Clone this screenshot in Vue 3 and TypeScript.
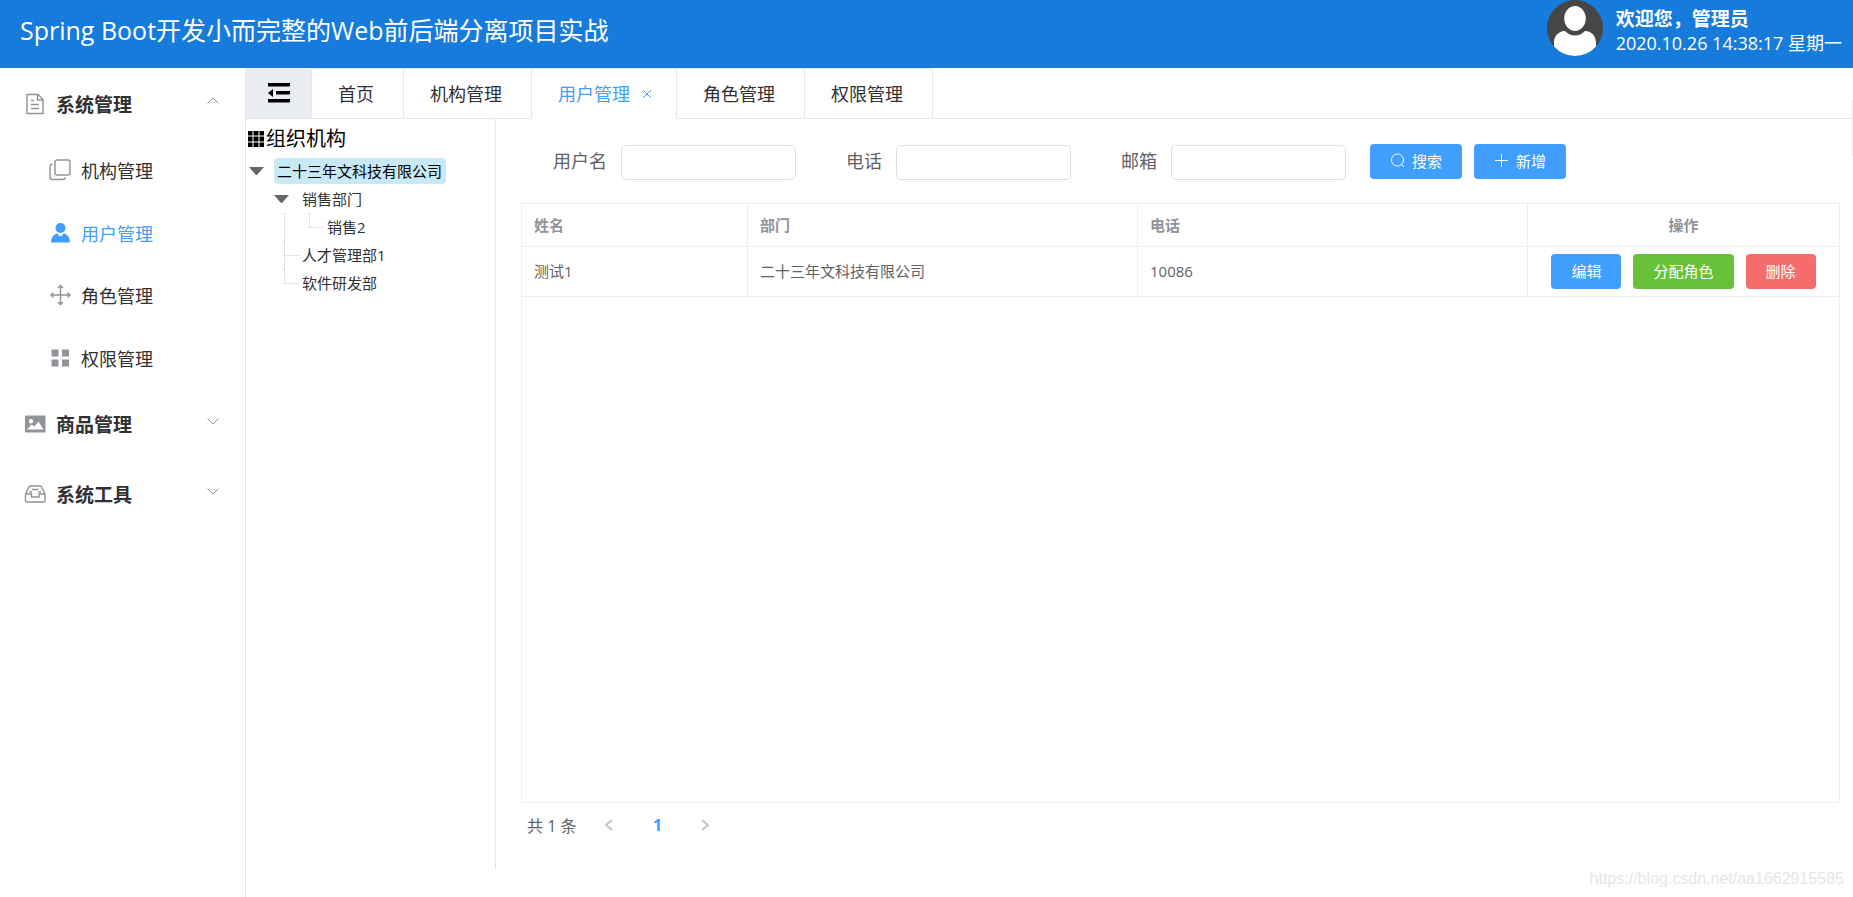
<script setup lang="ts">
import { reactive, ref } from 'vue'

interface MenuItem { key: string; label: string; icon: string }
interface MenuGroup { label: string; icon: string; open: boolean; children: MenuItem[] }
interface Tab { label: string; closable: boolean }
interface Field { id: string; label: string }
interface UserRow { name: string; dept: string; phone: string }

const groups = reactive<MenuGroup[]>([
  {
    label: '系统管理', icon: 'document', open: true,
    children: [
      { key: 'org', label: '机构管理', icon: 'copy' },
      { key: 'user', label: '用户管理', icon: 'user' },
      { key: 'role', label: '角色管理', icon: 'rank' },
      { key: 'perm', label: '权限管理', icon: 'menu' },
    ],
  },
  { label: '商品管理', icon: 'picture', open: false, children: [] },
  { label: '系统工具', icon: 'box', open: false, children: [] },
])
const activeMenu = ref('user')

const tabs: Tab[] = [
  { label: '首页', closable: false },
  { label: '机构管理', closable: false },
  { label: '用户管理', closable: true },
  { label: '角色管理', closable: false },
  { label: '权限管理', closable: false },
]
const activeTab = ref('用户管理')

const fields: Field[] = [
  { id: 'username', label: '用户名' },
  { id: 'phone', label: '电话' },
  { id: 'email', label: '邮箱' },
]
const query = reactive<Record<string, string>>({ username: '', phone: '', email: '' })

const rows: UserRow[] = [{ name: '测试1', dept: '二十三年文科技有限公司', phone: '10086' }]
</script>

<template>
  <div class="page">
    <header class="topbar">
      <h1>Spring Boot开发小而完整的Web前后端分离项目实战</h1>
      <div class="account">
        <svg class="avatar" viewBox="0 0 56 56" aria-hidden="true">
          <circle cx="28" cy="28" r="28" fill="#464646" />
          <ellipse cx="28" cy="18.500" rx="10.800" ry="12.500" fill="#fff" />
          <path d="M7 46.500V43C7 36 11 31.500 18 31Q22.500 35.500 28 35.500T38 31C45 31.500 49 36 49 43V46.500A28 28 0 0 1 7 46.500Z" fill="#fff" />
        </svg>
        <div class="greeting">
          <strong>欢迎您，管理员</strong>
          <span>2020.10.26 14:38:17 星期一</span>
        </div>
      </div>
    </header>

    <div class="body">
      <nav class="sidebar">
        <section v-for="group in groups" :key="group.label">
          <button class="group" type="button" :aria-expanded="group.open" @click="group.open = !group.open">
            <svg v-if="group.icon === 'document'" class="icon" viewBox="0 0 22 22">
              <path d="M3 1.500H14L19 6.500V20.500H3ZM13.500 1.500V7H19M7 7.500H10M7 11.500H15M7 15.500H15" />
            </svg>
            <svg v-else-if="group.icon === 'picture'" class="icon solid" viewBox="0 0 22 22">
              <path fill-rule="evenodd" d="M1 2.500H21.500V19.500H1ZM7 6A2.200 2.200 0 1 0 7 10.400A2.200 2.200 0 0 0 7 6ZM3 16.500H19.500L14.500 8.500L10.500 13.500L7.500 11.500Z" />
            </svg>
            <svg v-else class="icon" viewBox="0 0 22 22">
              <path d="M1.500 11L5 4Q5.500 3 6.500 3H16Q17 3 17.500 4L21 11V18Q21 19 20 19H2.500Q1.500 19 1.500 18V11H7.500V14H15V11H21M8 6.500H14.500M5.500 9H8M14.500 9H17" />
            </svg>
            <span>{{ group.label }}</span>
            <svg class="chevron" :class="{ flipped: group.open }" viewBox="0 0 14 14">
              <path d="M1.500 4.500L7 10L12.500 4.500" />
            </svg>
          </button>
          <ul v-if="group.open && group.children.length">
            <li v-for="item in group.children" :key="item.key">
              <a href="#" :class="{ active: item.key === activeMenu }" @click.prevent="activeMenu = item.key">
                <svg v-if="item.icon === 'copy'" class="icon" viewBox="0 0 22 22">
                  <rect x="6" y="1" width="15" height="15" rx="2" />
                  <path d="M3.500 5Q1 5.500 1 8V18Q1 20.500 3.500 20.500H13.500Q16 20.500 16.500 18.500" />
                </svg>
                <svg v-else-if="item.icon === 'user'" class="icon solid" viewBox="0 0 22 22">
                  <circle cx="11.500" cy="6" r="5" />
                  <path d="M2 20.500Q2 13 8.500 11.200L10.500 14.500L11.500 13.500L12.500 14.500L14.500 11.200Q21 13 21 20.500Z" />
                </svg>
                <svg v-else-if="item.icon === 'rank'" class="icon" viewBox="0 0 22 22">
                  <path d="M11.500 1.500V20.500M2 11H21M9 4L11.500 1.500L14 4M9 18L11.500 20.500L14 18M4.500 8.500L2 11L4.500 13.500M18.500 8.500L21 11L18.500 13.500" />
                </svg>
                <svg v-else class="icon solid" viewBox="0 0 22 22">
                  <path d="M2.500 2.500H9.500V9.500H2.500ZM13 2.500H20V9.500H13ZM2.500 12.500H9.500V19.500H2.500ZM13 12.500H20V19.500H13Z" />
                </svg>
                <span>{{ item.label }}</span>
              </a>
            </li>
          </ul>
        </section>
      </nav>

      <main class="workspace">
        <div class="tabbar">
          <button class="collapse" type="button" aria-label="收起菜单">
            <svg viewBox="0 0 24 20">
              <path d="M1 0H23V3.500H1ZM9 8H23V11.500H9ZM1 16H23V19.500H1ZM1 10L6 6V14Z" />
            </svg>
          </button>
          <div class="tabs" role="tablist">
            <button
              v-for="tab in tabs" :key="tab.label" class="tab" type="button" role="tab"
              :class="{ active: tab.label === activeTab }" :aria-selected="tab.label === activeTab"
              @click="activeTab = tab.label"
            >
              <span>{{ tab.label }}</span>
              <svg v-if="tab.closable" viewBox="0 0 10 10"><path d="M1 1L9 9M9 1L1 9" /></svg>
            </button>
          </div>
        </div>

        <div class="content">
          <aside class="org">
            <h2>
              <svg viewBox="0 0 16 16">
                <path d="M0 0H4.500V4.500H0ZM5.500 0H10.500V4.500H5.500ZM11.500 0H16V4.500H11.500ZM0 5.500H4.500V10.500H0ZM5.500 5.500H10.500V10.500H5.500ZM11.500 5.500H16V10.500H11.500ZM0 11.500H4.500V16H0ZM5.500 11.500H10.500V16H5.500ZM11.500 11.500H16V16H11.500Z" />
              </svg>
              <span>组织机构</span>
            </h2>
            <ul class="tree" role="tree">
              <li role="treeitem">
                <div class="node"><i class="caret"></i><span class="selected">二十三年文科技有限公司</span></div>
                <ul>
                  <li role="treeitem">
                    <div class="node"><i class="caret"></i><span>销售部门</span></div>
                    <ul>
                      <li role="treeitem"><div class="node leaf last"><span>销售2</span></div></li>
                    </ul>
                  </li>
                  <li role="treeitem"><div class="node leaf"><span>人才管理部1</span></div></li>
                  <li role="treeitem"><div class="node leaf last"><span>软件研发部</span></div></li>
                </ul>
              </li>
            </ul>
          </aside>

          <section class="users">
            <form @submit.prevent>
              <div v-for="field in fields" :key="field.id" class="field">
                <label :for="field.id">{{ field.label }}</label>
                <input :id="field.id" v-model="query[field.id]" type="text">
              </div>
              <div class="actions">
                <button class="btn primary" type="submit">
                  <svg viewBox="0 0 15 15"><circle cx="7.500" cy="7" r="6" /><path d="M11.500 11.500L14 14" /></svg>
                  <span>搜索</span>
                </button>
                <button class="btn primary" type="button">
                  <svg viewBox="0 0 15 15"><path d="M7.500 1V14M1 7.500H14" /></svg>
                  <span>新增</span>
                </button>
              </div>
            </form>

            <div class="table-box">
              <table>
                <colgroup><col class="c-name"><col class="c-wide"><col class="c-wide"><col class="c-ops"></colgroup>
                <thead>
                  <tr><th>姓名</th><th>部门</th><th>电话</th><th class="ops">操作</th></tr>
                </thead>
                <tbody>
                  <tr v-for="row in rows" :key="row.name">
                    <td>{{ row.name }}</td>
                    <td>{{ row.dept }}</td>
                    <td>{{ row.phone }}</td>
                    <td class="ops">
                      <div class="row-actions">
                        <button class="btn primary" type="button">编辑</button>
                        <button class="btn success" type="button">分配角色</button>
                        <button class="btn danger" type="button">删除</button>
                      </div>
                    </td>
                  </tr>
                </tbody>
              </table>
            </div>

            <div class="pager">
              <span class="total">共 1 条</span>
              <button type="button" disabled aria-label="上一页"><svg viewBox="0 0 14 14"><path d="M10 2L4 7L10 12" /></svg></button>
              <button type="button" class="current">1</button>
              <button type="button" disabled aria-label="下一页"><svg viewBox="0 0 14 14"><path d="M4 2L10 7L4 12" /></svg></button>
            </div>
          </section>
        </div>
      </main>
    </div>
    <span class="watermark">https://blog.csdn.net/aa1662915585</span>
  </div>
</template>

<style>
body { margin: 0; }
</style>

<style scoped>
.page {
  position: relative;
  display: flex;
  flex-direction: column;
  min-height: 100vh;
  background: #fff;
  color: #303133;
  font-family: "Open Sans", "Noto Sans CJK SC", sans-serif;
}
.page *, .page { box-sizing: border-box; }
button { font-family: inherit; cursor: pointer; }
ul { list-style: none; margin: 0; padding: 0; }
svg { flex: none; fill: none; stroke: currentColor; }

.topbar {
  display: flex;
  justify-content: space-between;
  height: 68px;
  padding: 0 11px 0 20px;
  background: #177bdb;
  color: #fff;
}
h1 { margin: 0; font-size: 25px; font-weight: 400; line-height: 61px; white-space: nowrap; }
.account { display: flex; gap: 13px; }
.avatar { width: 56px; height: 56px; stroke: none; }
.greeting { display: flex; flex-direction: column; padding-top: 8px; white-space: nowrap; }
.greeting strong { font-size: 19px; line-height: 23px; }
.greeting span { font-size: 18px; line-height: 24px; }

.body { display: flex; flex: 1; }
.sidebar { flex: none; width: 246px; padding-top: 1px; border-right: 1px solid #e6e6e6; }
.group {
  display: flex;
  align-items: center;
  gap: 10px;
  width: 100%;
  height: 70px;
  padding: 0 25px 0 24px;
  border: 0;
  background: none;
  color: #303133;
  font-size: 19px;
  font-weight: 700;
}
.icon { width: 22px; height: 22px; color: #909399; stroke-width: 1.4; }
.icon.solid { fill: currentColor; stroke: none; }
.chevron { width: 14px; height: 14px; margin: 0 0 7px auto; color: #909399; }
.flipped { transform: rotate(180deg); }
.sidebar ul { display: grid; grid-template-rows: repeat(4, 1fr); height: 250px; }
.sidebar a {
  display: flex;
  align-items: center;
  gap: 10px;
  height: 100%;
  padding-left: 49px;
  color: #303133;
  font-size: 18px;
  text-decoration: none;
}
.sidebar a.active, .sidebar a.active .icon { color: #409eff; }

.workspace { position: relative; display: flex; flex: 1; flex-direction: column; min-width: 0; }
.workspace::after { content: ""; position: absolute; top: 32px; right: 0; width: 1px; height: 56px; background: #ebebeb; }
.tabbar { display: flex; height: 51px; border-bottom: 1px solid #e4e7ed; }
.collapse { display: flex; align-items: center; justify-content: center; width: 65px; padding: 0; border: 0; background: #e9edf2; }
.collapse svg { width: 24px; height: 20px; fill: #000; stroke: none; }
.tabs { display: flex; height: 51px; border: 1px solid #e4e7ed; border-bottom: 0; border-radius: 4px 4px 0 0; }
.tab {
  display: flex;
  align-items: center;
  gap: 12px;
  height: 50px;
  padding: 0 29px 2px 26px;
  border: 0;
  border-left: 1px solid #e4e7ed;
  border-bottom: 1px solid #e4e7ed;
  background: none;
  color: #303133;
  font-size: 18px;
}
.tab:first-child { border-left: 0; }
.tab.active { padding: 0 24px 2px 26px; border-bottom-color: #fff; color: #409eff; }
.tab svg { width: 10px; height: 10px; margin-top: 3px; }

.content { display: flex; flex: 1; padding-bottom: 28px; }
.org { flex: none; width: 250px; border-right: 1px solid #e6e6e6; }
h2 { display: flex; align-items: center; gap: 2px; margin: 0; padding: 5px 0 0 2px; color: #000; font-size: 20px; font-weight: 400; line-height: 30px; }
h2 svg { width: 16px; height: 16px; fill: #000; stroke: none; }
.tree { padding: 3px 0 0 3px; font-size: 15px; }
.tree ul { padding-left: 25px; }
.node { display: flex; align-items: center; height: 28px; }
.caret { flex: none; width: 15px; margin-right: 10px; border: 7px solid transparent; border-top: 8px solid #666; border-bottom: 0; }
.node span { padding: 0 3px; line-height: 26px; white-space: nowrap; }
.node .selected { padding: 0 4px 0 3px; border-radius: 4px; background: #c9e9f7; color: #000; }
.leaf { position: relative; padding-left: 25px; }
.leaf::before, .leaf::after { content: ""; position: absolute; left: 10px; }
.leaf::before { top: 0; bottom: 0; border-left: 1px dotted #ccc; }
.leaf::after { top: 14px; width: 15px; border-top: 1px dotted #ccc; }
.leaf.last::before { bottom: 14px; }
.tree ul ul { position: relative; }
.tree ul ul::before { content: ""; position: absolute; top: 0; bottom: 0; left: 10px; border-left: 1px dotted #ccc; }

.users { display: flex; flex: 1; flex-direction: column; min-width: 0; padding: 25px 13px 27px 25px; }
form { display: flex; height: 59px; }
.field { display: flex; align-items: flex-start; gap: 14px; }
label { width: 86px; color: #606266; font-size: 18px; line-height: 35px; text-align: right; }
.field input {
  width: 175px;
  height: 35px;
  margin-top: 1px;
  padding: 0 15px;
  border: 1px solid #dcdfe6;
  border-radius: 5px;
  background: #fff;
  color: #606266;
  font: inherit;
  font-size: 16px;
  outline: 0;
}
.actions { display: flex; align-items: flex-start; gap: 12px; margin-left: 24px; }
.btn {
  display: flex;
  align-items: center;
  gap: 7px;
  height: 35px;
  padding: 0 20px 2px;
  border: 0;
  border-radius: 4px;
  color: #fff;
  font-size: 15px;
  white-space: nowrap;
}
.btn svg { width: 15px; height: 15px; }
.primary { background: #409eff; }
.success { background: #67c23a; }
.danger { background: #f56c6c; }

.table-box { flex: 1; border: 1px solid #ebeef5; }
table { width: 100%; table-layout: fixed; border-collapse: separate; border-spacing: 0; font-size: 15px; }
.c-name { width: 226px; }
.c-ops { width: 311px; }
th, td { padding: 0 12px 2px; border-right: 1px solid #ebeef5; border-bottom: 1px solid #ebeef5; text-align: left; }
th:last-child, td:last-child { border-right: 0; }
th { height: 43px; color: #909399; font-weight: 700; }
td { height: 50px; color: #606266; }
td.ops { padding-bottom: 0; }
th.ops { text-align: center; }
.row-actions { display: flex; justify-content: center; gap: 12px; }

.pager { display: flex; align-items: center; height: 35px; margin-top: 4px; padding-left: 6px; color: #606266; font-size: 16px; }
.total { margin-right: 9px; }
.pager button { display: flex; align-items: center; justify-content: center; width: 48px; height: 35px; padding: 0; border: 0; background: none; color: #c0c4cc; font-size: 16px; font-weight: 700; }
.pager svg { width: 14px; height: 14px; stroke-width: 2; }
.pager .current { color: #409eff; }

.watermark {
  position: absolute;
  right: 9px;
  bottom: 9px;
  color: #e6e6e6;
  font-family: "Liberation Sans", Arial, sans-serif;
  font-size: 16px;
  line-height: 18px;
}
</style>
